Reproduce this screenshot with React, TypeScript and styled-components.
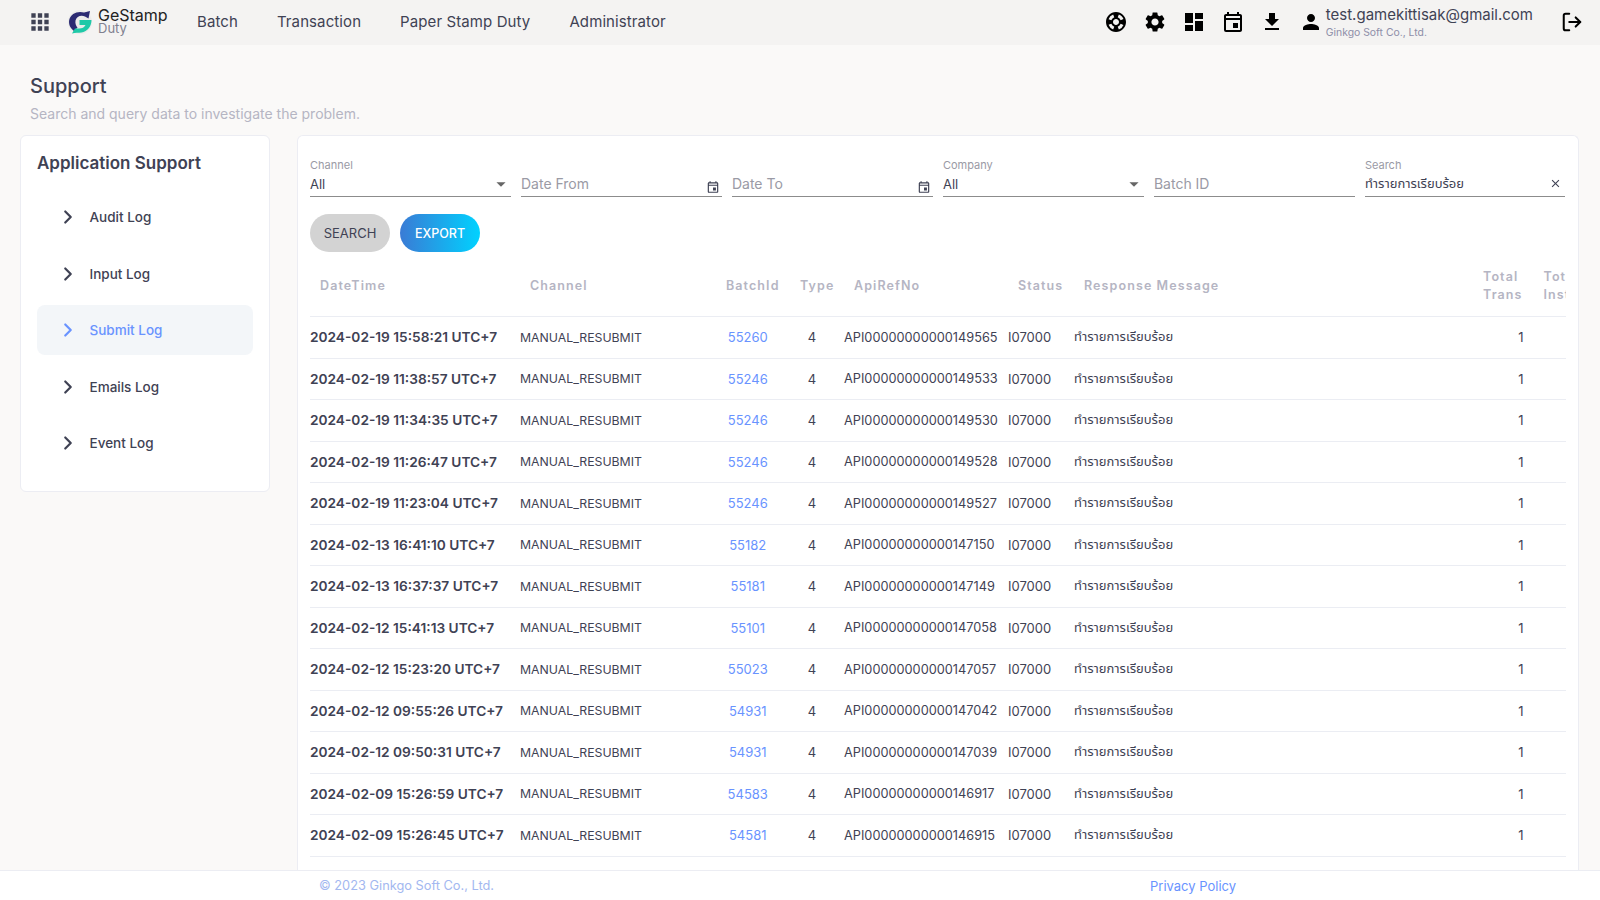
import { ReactNode } from "react";
import styled, { createGlobalStyle } from "styled-components";
import {
  MdApps,
  MdArrowDropDown,
  MdClose,
  MdDashboard,
  MdFileDownload,
  MdOutlineEvent,
  MdPerson,
  MdSettings,
  MdSupport,
} from "react-icons/md";
import { ChevronRight, LogOut } from "lucide-react";

const FONT = `Inter, "Noto Sans", "Noto Sans Thai", "Noto Sans CJK SC", sans-serif`;
const THAI = "ทำรายการเรียบร้อย";

const rows = [
  ["2024-02-19 15:58:21 UTC+7", "55260", "API00000000000149565"],
  ["2024-02-19 11:38:57 UTC+7", "55246", "API00000000000149533"],
  ["2024-02-19 11:34:35 UTC+7", "55246", "API00000000000149530"],
  ["2024-02-19 11:26:47 UTC+7", "55246", "API00000000000149528"],
  ["2024-02-19 11:23:04 UTC+7", "55246", "API00000000000149527"],
  ["2024-02-13 16:41:10 UTC+7", "55182", "API00000000000147150"],
  ["2024-02-13 16:37:37 UTC+7", "55181", "API00000000000147149"],
  ["2024-02-12 15:41:13 UTC+7", "55101", "API00000000000147058"],
  ["2024-02-12 15:23:20 UTC+7", "55023", "API00000000000147057"],
  ["2024-02-12 09:55:26 UTC+7", "54931", "API00000000000147042"],
  ["2024-02-12 09:50:31 UTC+7", "54931", "API00000000000147039"],
  ["2024-02-09 15:26:59 UTC+7", "54583", "API00000000000146917"],
  ["2024-02-09 15:26:45 UTC+7", "54581", "API00000000000146915"],
];

const menu = ["Audit Log", "Input Log", "Submit Log", "Emails Log", "Event Log"];

export default function App() {
  return (
    <Page>
      <GlobalStyle />
      <TopBar>
        <AppsButton>
          <MdApps size={26} />
        </AppsButton>
        <Logo>
          <LogoMark />
          <LogoText>
            <b>GeStamp</b>
            <span>Duty</span>
          </LogoText>
        </Logo>
        <Nav>
          <NavItem>Batch</NavItem>
          <NavItem>Transaction</NavItem>
          <NavItem>Paper Stamp Duty</NavItem>
          <NavItem>Administrator</NavItem>
        </Nav>
        <TopIcons>
          <MdSupport size={24} />
          <MdSettings size={24} />
          <MdDashboard size={24} />
          <MdOutlineEvent size={24} />
          <MdFileDownload size={24} />
        </TopIcons>
        <UserBox>
          <MdPerson size={24} />
          <UserText>
            <UserMail>test.gamekittisak@gmail.com</UserMail>
            <UserCompany>Ginkgo Soft Co., Ltd.</UserCompany>
          </UserText>
        </UserBox>
        <LogoutButton>
          <LogOut size={22} strokeWidth={2.2} />
        </LogoutButton>
      </TopBar>

      <Main>
        <PageTitle>Support</PageTitle>
        <PageSub>Search and query data to investigate the problem.</PageSub>
        <Columns>
          <SideCard>
            <SideTitle>Application Support</SideTitle>
            {menu.map((m) => (
              <MenuItem key={m} $active={m === "Submit Log"}>
                <ChevronRight size={22} strokeWidth={2.4} />
                {m}
              </MenuItem>
            ))}
          </SideCard>

          <ContentCard>
            <Filters>
              <Field label="Channel" value="All" icon={<ArrowWrap><MdArrowDropDown size={22} /></ArrowWrap>} />
              <Field placeholder="Date From" icon={<SmallEvent />} />
              <Field placeholder="Date To" icon={<SmallEvent />} />
              <Field label="Company" value="All" icon={<ArrowWrap><MdArrowDropDown size={22} /></ArrowWrap>} />
              <Field placeholder="Batch ID" />
              <Field label="Search" value={THAI} icon={<ClearWrap><MdClose size={13} /></ClearWrap>} />
            </Filters>
            <Buttons>
              <GreyButton>SEARCH</GreyButton>
              <BlueButton>EXPORT</BlueButton>
            </Buttons>
            <Table>
              <HeadRow>
                <HeadCell $first>DateTime</HeadCell>
                <HeadCell>Channel</HeadCell>
                <HeadCell $center>BatchId</HeadCell>
                <HeadCell $center>Type</HeadCell>
                <HeadCell>ApiRefNo</HeadCell>
                <HeadCell>Status</HeadCell>
                <HeadCell>Response Message</HeadCell>
                <HeadCell $total>
                  Total
                  <br />
                  Trans
                </HeadCell>
                <HeadCell $last>
                  Total
                  <br />
                  Inst
                </HeadCell>
              </HeadRow>
              {rows.map((r) => (
                <Row key={r[0]}>
                  <DateCell>{r[0]}</DateCell>
                  <ChannelCell>MANUAL_RESUBMIT</ChannelCell>
                  <BatchLink>{r[1]}</BatchLink>
                  <CenterCell>4</CenterCell>
                  <ApiCell>{r[2]}</ApiCell>
                  <Cell>I07000</Cell>
                  <Cell>{THAI}</Cell>
                  <TotalCell>1</TotalCell>
                </Row>
              ))}
            </Table>
          </ContentCard>
        </Columns>
      </Main>

      <Footer>
        <Copyright>© 2023 Ginkgo Soft Co., Ltd.</Copyright>
        <Privacy>Privacy Policy</Privacy>
      </Footer>
    </Page>
  );
}

function Field({
  label,
  value,
  placeholder,
  icon,
}: {
  label?: string;
  value?: string;
  placeholder?: string;
  icon?: ReactNode;
}) {
  return (
    <FieldBox>
      <FieldLabel>{label}</FieldLabel>
      <FieldLine>
        {value ? <FieldValue>{value}</FieldValue> : <FieldHint>{placeholder}</FieldHint>}
        {icon}
      </FieldLine>
    </FieldBox>
  );
}

function SmallEvent() {
  return (
    <EventWrap>
      <MdOutlineEvent size={14} />
    </EventWrap>
  );
}

function LogoMark() {
  return (
    <svg width="24" height="24" viewBox="0 0 24 24">
      <circle cx="12" cy="12" r="12" fill="#ebebea" />
      <path
        d="M22 1l-1.500 7.500-3.500-2C13 4.500 8.500 6.500 7.500 10.500 7 13.500 8 16 9.500 17.500L6 21C2 18 .5 14 1.200 10 2.500 3.500 10 .5 16 2.500Z"
        fill="#2b2a72"
      />
      <path
        d="M11.500 10H23.500C23.500 16.500 19.500 21.500 13.500 22.500 10.500 23 7.500 22.500 4 23.500L7 18.500 11 18.500C14 18.500 16.500 17.500 17.500 15H11.500Z"
        fill="#1fc9a8"
      />
    </svg>
  );
}

const GlobalStyle = createGlobalStyle`
  html, body {
    margin: 0;
    height: 100%;
    overflow: hidden;
  }
  body {
    font-family: ${FONT};
    color: #3f4254;
    background: #faf9f8;
  }
`;

const Page = styled.div`
  height: 100vh;
  display: flex;
  flex-direction: column;
`;

const TopBar = styled.header`
  height: 45px;
  flex: none;
  box-sizing: border-box;
  display: flex;
  align-items: center;
  background: #f4f3f2;
  padding: 0 17px 1px 27px;
`;

const AppsButton = styled.div`
  display: flex;
  color: #3f4254;
  margin-right: 15px;
`;

const Logo = styled.div`
  display: flex;
  align-items: center;
  gap: 6px;
  width: 129px;
`;

const LogoText = styled.div`
  display: flex;
  flex-direction: column;
  line-height: 13px;
  b {
    font-size: 16px;
    font-weight: 400;
    color: #222;
  }
  span {
    font-size: 13px;
    color: #80808f;
  }
`;

const Nav = styled.nav`
  display: flex;
  gap: 39px;
  padding-bottom: 1px;
`;

const NavItem = styled.span`
  font-size: 15px;
  letter-spacing: 0.1px;
  color: #3f4254;
`;

const TopIcons = styled.div`
  margin-left: auto;
  display: flex;
  align-items: center;
  gap: 15px;
  color: #000;
`;

const UserBox = styled.div`
  display: flex;
  align-items: center;
  gap: 3px;
  margin-left: 15px;
  color: #000;
`;

const UserText = styled.div`
  display: flex;
  flex-direction: column;
  padding-top: 2px;
`;

const UserMail = styled.span`
  font-size: 15px;
  line-height: 18px;
  color: #3f4254;
`;

const UserCompany = styled.span`
  font-size: 10.4px;
  line-height: 17px;
  color: #8e8ea8;
`;

const LogoutButton = styled.div`
  display: flex;
  margin-left: 28px;
  color: #000;
`;

const Main = styled.main`
  flex: 1;
  min-height: 0;
  overflow: hidden;
  padding: 0 21px 0 20px;
  display: flex;
  flex-direction: column;
`;

const PageTitle = styled.h1`
  margin: 27px 0 0 10px;
  font-size: 20px;
  line-height: 28px;
  font-weight: 500;
`;

const PageSub = styled.p`
  margin: 4px 0 0 10px;
  font-size: 14px;
  line-height: 20px;
  color: #b5b5c3;
`;

const Columns = styled.div`
  flex: 1;
  min-height: 0;
  margin-top: 11px;
  display: flex;
  gap: 27px;
  align-items: flex-start;
`;

const SideCard = styled.aside`
  width: 250px;
  height: 357px;
  flex: none;
  box-sizing: border-box;
  background: #fff;
  border: 1px solid #ecedf3;
  border-radius: 6px;
  padding: 15px 16px 0;
`;

const SideTitle = styled.h2`
  margin: 0 0 17px;
  font-size: 17px;
  line-height: 24px;
  font-weight: 600;
`;

const MenuItem = styled.div<{ $active?: boolean }>`
  height: 50px;
  margin-bottom: 6.5px;
  border-radius: 8px;
  display: flex;
  align-items: center;
  gap: 10.5px;
  padding-left: 20px;
  font-size: 13.5px;
  font-weight: 500;
  color: ${(p) => (p.$active ? "#6993ff" : "#3f4254")};
  background: ${(p) => (p.$active ? "#f3f6f9" : "transparent")};
`;

const ContentCard = styled.section`
  flex: 1;
  min-width: 0;
  height: 100%;
  box-sizing: border-box;
  overflow: hidden;
  background: #fff;
  border: 1px solid #ecedf3;
  border-bottom: 0;
  border-radius: 6px 6px 0 0;
  padding: 0 12.5px 0 12px;
`;

const Filters = styled.div`
  display: grid;
  grid-template-columns: repeat(6, 1fr);
  gap: 10.4px;
  margin-top: 22.5px;
`;

const FieldBox = styled.div`
  display: flex;
  flex-direction: column;
`;

const FieldLabel = styled.label`
  height: 13px;
  font-size: 11px;
  line-height: 13px;
  color: #9a9aa5;
`;

const FieldLine = styled.div`
  height: 24px;
  display: flex;
  align-items: center;
  justify-content: space-between;
  border-bottom: 1px solid #8c8c8c;
  color: #666;
`;

const FieldValue = styled.span`
  font-size: 13px;
  color: #3f4254;
`;

const FieldHint = styled.span`
  font-size: 14px;
  color: #9a9aa5;
`;

const EventWrap = styled.span`
  display: flex;
  margin: 6px 2px 0 0;
  color: #3f4254;
`;

const ArrowWrap = styled.span`
  display: flex;
  margin-right: -1px;
`;

const ClearWrap = styled.span`
  display: flex;
  margin-right: 3px;
  color: #3f4254;
`;

const Buttons = styled.div`
  display: flex;
  gap: 10px;
  margin-top: 17.5px;
`;

const GreyButton = styled.button`
  width: 80px;
  height: 38px;
  border: 0;
  border-radius: 19px;
  background: #d3d3d3;
  color: #3f4254;
  font: 400 13px ${FONT};
`;

const BlueButton = styled(GreyButton)`
  background: linear-gradient(90deg, #3a7bd5, #00d2ff);
  color: #fff;
  font-size: 12.5px;
  font-weight: 500;
`;

const TABLE_COLUMNS = "200px 195.5px 84.5px 44px 164px 66px 396px 73.5px 106px";

const Table = styled.div`
  overflow: hidden;
  margin-top: 8px;
`;

const HeadRow = styled.div`
  display: grid;
  grid-template-columns: ${TABLE_COLUMNS};
  align-items: center;
  height: 57px;
  box-sizing: border-box;
  padding-bottom: 5px;
  border-bottom: 1px solid #ebedf3;
  width: 1400px;
`;

const HeadCell = styled.div<{ $first?: boolean; $center?: boolean; $total?: boolean; $last?: boolean }>`
  font-size: 12.5px;
  line-height: 18px;
  font-weight: 600;
  letter-spacing: 1.1px;
  color: #b5b5c3;
  white-space: nowrap;
  padding-left: ${(p) => (p.$first || p.$center || p.$last ? "10px" : p.$total ? "23px" : "20px")};
  text-align: ${(p) => (p.$center ? "center" : "left")};
`;

const Row = styled.div`
  display: grid;
  grid-template-columns: ${TABLE_COLUMNS};
  align-items: center;
  height: 41.5px;
  box-sizing: border-box;
  border-bottom: 1px solid #ebedf3;
`;

const Cell = styled.div`
  font-size: 13px;
  padding-left: 10px;
  white-space: nowrap;
`;

const ChannelCell = styled(Cell)`
  font-size: 12.3px;
`;

const ApiCell = styled(Cell)`
  font-size: 12.75px;
`;

const DateCell = styled.div`
  font-size: 13.7px;
  font-weight: 600;
  white-space: nowrap;
`;

const CenterCell = styled.div`
  font-size: 13px;
  text-align: center;
`;

const BatchLink = styled(CenterCell)`
  color: #6993ff;
`;

const TotalCell = styled.div`
  font-size: 13px;
  text-align: right;
  padding-right: 10px;
`;

const Footer = styled.footer`
  height: 30px;
  flex: none;
  box-sizing: border-box;
  display: flex;
  align-items: center;
  background: #fff;
  border-top: 1px solid #ecedf3;
  padding-left: 319px;
  font-size: 12.8px;
`;

const Copyright = styled.span`
  width: 831px;
  color: #a3b8f0;
`;

const Privacy = styled.span`
  font-size: 13px;
  color: #6993ff;
`;
